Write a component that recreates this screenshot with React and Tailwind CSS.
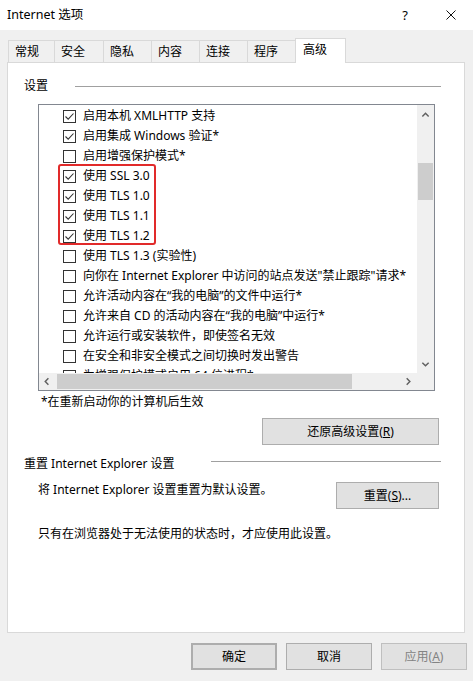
import React from 'react';

const rows = [
  { text: '启用本机 XMLHTTP 支持', checked: true },
  { text: '启用集成 Windows 验证*', checked: true },
  { text: '启用增强保护模式*', checked: false },
  { text: '使用 SSL 3.0', checked: true },
  { text: '使用 TLS 1.0', checked: true },
  { text: '使用 TLS 1.1', checked: true },
  { text: '使用 TLS 1.2', checked: true },
  { text: '使用 TLS 1.3 (实验性)', checked: false },
  { text: '向你在 Internet Explorer 中访问的站点发送"禁止跟踪"请求*', checked: false },
  { text: '允许活动内容在“我的电脑”的文件中运行*', checked: false },
  { text: '允许来自 CD 的活动内容在“我的电脑”中运行*', checked: false },
  { text: '允许运行或安装软件，即使签名无效', checked: false },
  { text: '在安全和非安全模式之间切换时发出警告', checked: false },
  { text: '为增强保护模式启用 64 位进程*', checked: false },
];

const tabs = [
  { label: '常规', w: 'w-[47px]' },
  { label: '安全', w: 'w-[50px]' },
  { label: '隐私', w: 'w-[49px]' },
  { label: '内容', w: 'w-[49px]' },
  { label: '连接', w: 'w-[49px]' },
  { label: '程序', w: 'w-[49px]' },
];

function CheckBox({ checked }) {
  return (
    <div className="w-[13px] h-[13px] border border-[#333333] bg-white shrink-0 flex items-center justify-center">
      {checked && (
        <svg width="11" height="11" viewBox="0 0 11 11">
          <path d="M1.5 5.5 L4.2 8.2 L9.5 2.5" fill="none" stroke="#333333" strokeWidth="1.1" />
        </svg>
      )}
    </div>
  );
}

function Chevron({ dir }) {
  const paths = {
    up: 'M1.5 6 L5 2.5 L8.5 6',
    down: 'M1.5 3 L5 6.5 L8.5 3',
    left: 'M6 1.5 L2.5 5 L6 8.5',
    right: 'M3 1.5 L6.5 5 L3 8.5',
  };
  return (
    <svg width="9" height="9" viewBox="0 0 10 10">
      <path d={paths[dir]} fill="none" stroke="#606060" strokeWidth="1.6" />
    </svg>
  );
}

function WinButton({ children, className = '' }) {
  return (
    <div className={`h-[27px] bg-[#e1e1e1] border border-[#adadad] flex items-center justify-center text-[12px] leading-[16px] ${className}`}>
      {children}
    </div>
  );
}

export default function App() {
  return (
    <div className="w-[473px] h-[681px] bg-[#f0f0f0] flex flex-col text-black font-['Noto_Sans','Noto_Sans_CJK_SC',sans-serif] text-[12px] leading-[16px] overflow-hidden">
      {/* title bar */}
      <div className="h-[30px] bg-white flex items-center shrink-0">
        <span className="ml-[7px] text-[12.5px]">Internet 选项</span>
        <span className="ml-auto mr-[38px] text-[13px]">?</span>
        <svg width="10" height="10" viewBox="0 0 10 10" className="mr-[17px]">
          <path d="M0.5 0.5 L9.5 9.5 M9.5 0.5 L0.5 9.5" stroke="#111" strokeWidth="1" />
        </svg>
      </div>

      {/* tabs */}
      <div className="flex items-end h-[24px] ml-[8px] mt-[8px]">
        {tabs.map((t, i) => (
          <div
            key={t.label}
            className={`${t.w} h-[22px] border border-b-0 border-[#d9d9d9] bg-[#f0f0f0] pl-[6px] flex items-center ${i > 0 ? '-ml-px' : ''}`}
          >
            {t.label}
          </div>
        ))}
        <div className="w-[51px] h-[25px] -mb-px -ml-px relative z-10 border border-b-0 border-[#d9d9d9] bg-white pl-[7px] flex items-center pb-[2px]">
          高级
        </div>
      </div>

      {/* panel */}
      <div className="ml-[7px] w-[458px] h-[571px] bg-white border border-[#d9d9d9] flex flex-col shrink-0">
        <div className="flex items-center h-[16px] mt-[15px] ml-[16px] mr-[23px]">
          <span>设置</span>
          <div className="w-[366px] h-px bg-[#a0a0a0] ml-auto" />
        </div>

        {/* list box */}
        <div className="mt-[10px] ml-[30px] w-[397px] h-[287px] border border-[#828790] flex flex-col">
          <div className="flex h-[268px]">
            <div className="relative flex-1 overflow-hidden pt-[1px]">
              {rows.map((r) => (
                <div key={r.text} className="h-[20px] flex items-center pl-[24px] whitespace-nowrap">
                  <CheckBox checked={r.checked} />
                  <span className="ml-[7px]">{r.text}</span>
                </div>
              ))}
              <div className="absolute left-[19px] top-[59px] w-[98px] h-[81px] border-2 border-[#e12a2a] rounded-[3px]" />
            </div>
            <div className="w-[17px] bg-[#f0f0f0] flex flex-col items-center">
              <div className="h-[17px] flex items-center justify-center mt-[2px]">
                <Chevron dir="up" />
              </div>
              <div className="mt-[39px] w-[15px] h-[37px] bg-[#cdcdcd]" />
              <div className="mt-auto h-[17px] flex items-center justify-center">
                <Chevron dir="down" />
              </div>
            </div>
          </div>
          <div className="flex h-[17px] bg-[#f0f0f0]">
            <div className="w-[17px] flex items-center justify-center">
              <Chevron dir="left" />
            </div>
            <div className="flex-1 flex items-center">
              <div className="w-[295px] h-[15px] bg-[#cdcdcd] ml-px" />
            </div>
            <div className="w-[17px] flex items-center justify-center">
              <Chevron dir="right" />
            </div>
            <div className="w-[17px] bg-[#f0f0f0]" />
          </div>
        </div>

        <div className="mt-[3px] ml-[33px]">*在重新启动你的计算机后生效</div>

        <div className="flex justify-end mr-[25px] mt-[8px]">
          <WinButton className="w-[177px]">
            <span>
              还原高级设置(<span className="underline">R</span>)
            </span>
          </WinButton>
        </div>

        <div className="flex items-center h-[16px] mt-[11px] ml-[16px] mr-[23px]">
          <span>重置 Internet Explorer 设置</span>
          <div className="w-[230px] h-px bg-[#a0a0a0] ml-auto -mt-[5px]" />
        </div>

        <div className="flex items-start mt-[10px] ml-[30px] mr-[25px]">
          <span>将 Internet Explorer 设置重置为默认设置。</span>
          <WinButton className="w-[103px] ml-auto">
            <span>
              重置(<span className="underline">S</span>)...
            </span>
          </WinButton>
        </div>

        <div className="mt-[17px] ml-[30px]">只有在浏览器处于无法使用的状态时，才应使用此设置。</div>
      </div>

      {/* bottom buttons */}
      <div className="flex justify-end gap-[9px] mr-[6px] mt-[10px]">
        <WinButton className="w-[86px] border-2 border-[#0078d7]">确定</WinButton>
        <WinButton className="w-[86px]">取消</WinButton>
        <WinButton className="w-[86px] bg-[#cccccc] border-[#bfbfbf] text-[#838383]">
          <span>
            应用(<span className="underline">A</span>)
          </span>
        </WinButton>
      </div>
    </div>
  );
}
